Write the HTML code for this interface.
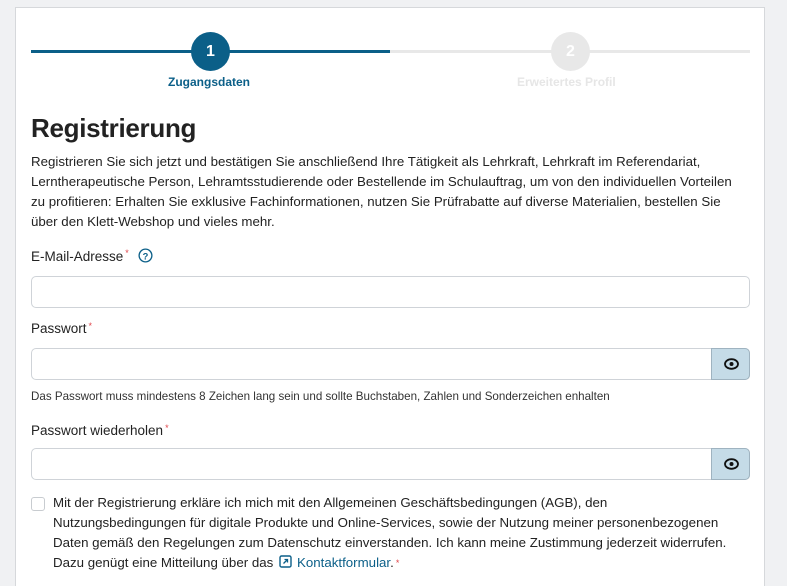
<!DOCTYPE html>
<html style="width:787px;height:586px;overflow:hidden"><head><meta charset="utf-8"><style>
*{box-sizing:border-box;margin:0;padding:0}
body{width:787px;height:586px;background:#f0f1f3;font-family:"Liberation Sans",sans-serif;color:#222;overflow:hidden;position:relative}
.card{position:absolute;left:15px;top:7px;width:750px;height:579px;background:#fff;border:1px solid #d6d8db;border-bottom:none}
.a{position:absolute;white-space:nowrap}
.line{position:absolute;height:3px;top:50px}
.circ{position:absolute;width:39px;height:39px;border-radius:50%;top:32px;color:#fff;font-weight:bold;font-size:16px;text-align:center;line-height:39px}
.inp{position:absolute;left:31px;width:719px;height:32px;border:1px solid #cfd3d8;border-radius:5px;background:#fff}
.eye{position:absolute;left:711px;width:39px;height:32px;background:#c5dbe7;border:1px solid #9fb3c0;border-radius:0 5px 5px 0}
.lbl{font-size:13.5px;color:#222}
.req{color:#e0454a;font-size:9px;vertical-align:top;margin-left:2px}
p.t{font-size:13.3px;line-height:20px}
</style></head><body>
<div class="card"></div>
<div class="line" style="left:31px;width:359px;background:#0b5f88"></div>
<div class="line" style="left:390px;width:360px;background:#e8e8e8"></div>
<div class="circ" style="left:191px;background:#0b5f88">1</div>
<div class="circ" style="left:551px;background:#e8e8e8">2</div>
<div class="a" style="left:168px;top:75px;font-size:12px;font-weight:bold;color:#0b5f88">Zugangsdaten</div>
<div class="a" style="left:517px;top:75px;font-size:12px;font-weight:bold;color:#e6e6e6">Erweitertes Profil</div>
<div class="a" style="left:31px;top:113px;font-size:26px;font-weight:bold;color:#222;letter-spacing:-0.3px">Registrierung</div>
<p class="a t" style="left:31px;top:152px">Registrieren Sie sich jetzt und bestätigen Sie anschließend Ihre Tätigkeit als Lehrkraft, Lehrkraft im Referendariat,<br>Lerntherapeutische Person, Lehramtsstudierende oder Bestellende im Schulauftrag, um von den individuellen Vorteilen<br>zu profitieren: Erhalten Sie exklusive Fachinformationen, nutzen Sie Prüfrabatte auf diverse Materialien, bestellen Sie<br>über den Klett-Webshop und vieles mehr.</p>
<div class="a lbl" style="left:31px;top:248px">E-Mail-Adresse<span class="req">*</span>
<svg width="15" height="15" viewBox="0 0 16 16" style="vertical-align:-2px;margin-left:5px"><circle cx="8" cy="8" r="6.8" fill="none" stroke="#0b5f88" stroke-width="1.4"/><text x="8" y="12" font-size="10" font-weight="bold" text-anchor="middle" fill="#0b5f88" font-family="Liberation Sans">?</text></svg></div>
<div class="inp" style="top:276px"></div>
<div class="a lbl" style="left:31px;top:321px">Passwort<span class="req">*</span></div>
<div class="inp" style="top:348px"></div>
<div class="eye" style="top:348px"><svg width="39" height="30" viewBox="0 0 39 30"><ellipse cx="19.5" cy="15" rx="6.5" ry="4.8" fill="none" stroke="#111" stroke-width="1.8"/><circle cx="19.5" cy="15" r="2" fill="#111"/></svg></div>
<div class="a" style="left:31px;top:390px;font-size:11.6px;color:#333">Das Passwort muss mindestens 8 Zeichen lang sein und sollte Buchstaben, Zahlen und Sonderzeichen enhalten</div>
<div class="a lbl" style="left:31px;top:423px">Passwort wiederholen<span class="req">*</span></div>
<div class="inp" style="top:448px"></div>
<div class="eye" style="top:448px"><svg width="39" height="30" viewBox="0 0 39 30"><ellipse cx="19.5" cy="15" rx="6.5" ry="4.8" fill="none" stroke="#111" stroke-width="1.8"/><circle cx="19.5" cy="15" r="2" fill="#111"/></svg></div>
<div class="a" style="left:31px;top:497px;width:14px;height:14px;border:1px solid #c8ccd0;border-radius:3px"></div>
<p class="a t" style="left:53px;top:493px">Mit der Registrierung erkläre ich mich mit den Allgemeinen Geschäftsbedingungen (AGB), den<br>Nutzungsbedingungen für digitale Produkte und Online-Services, sowie der Nutzung meiner personenbezogenen<br>Daten gemäß den Regelungen zum Datenschutz einverstanden. Ich kann meine Zustimmung jederzeit widerrufen.<br>Dazu genügt eine Mitteilung über das <svg width="13" height="13" viewBox="0 0 13 13" style="vertical-align:-1px;margin:0 5px 0 2px"><rect x="1" y="1" width="11" height="11" rx="1.5" fill="none" stroke="#0b5f88" stroke-width="1.4"/><path d="M4.5 8.5L8.5 4.5M5.5 4.5h3v3" fill="none" stroke="#0b5f88" stroke-width="1.3"/></svg><span style="color:#0b5f88">Kontaktformular</span>.<span class="req">*</span></p>
</body></html>
